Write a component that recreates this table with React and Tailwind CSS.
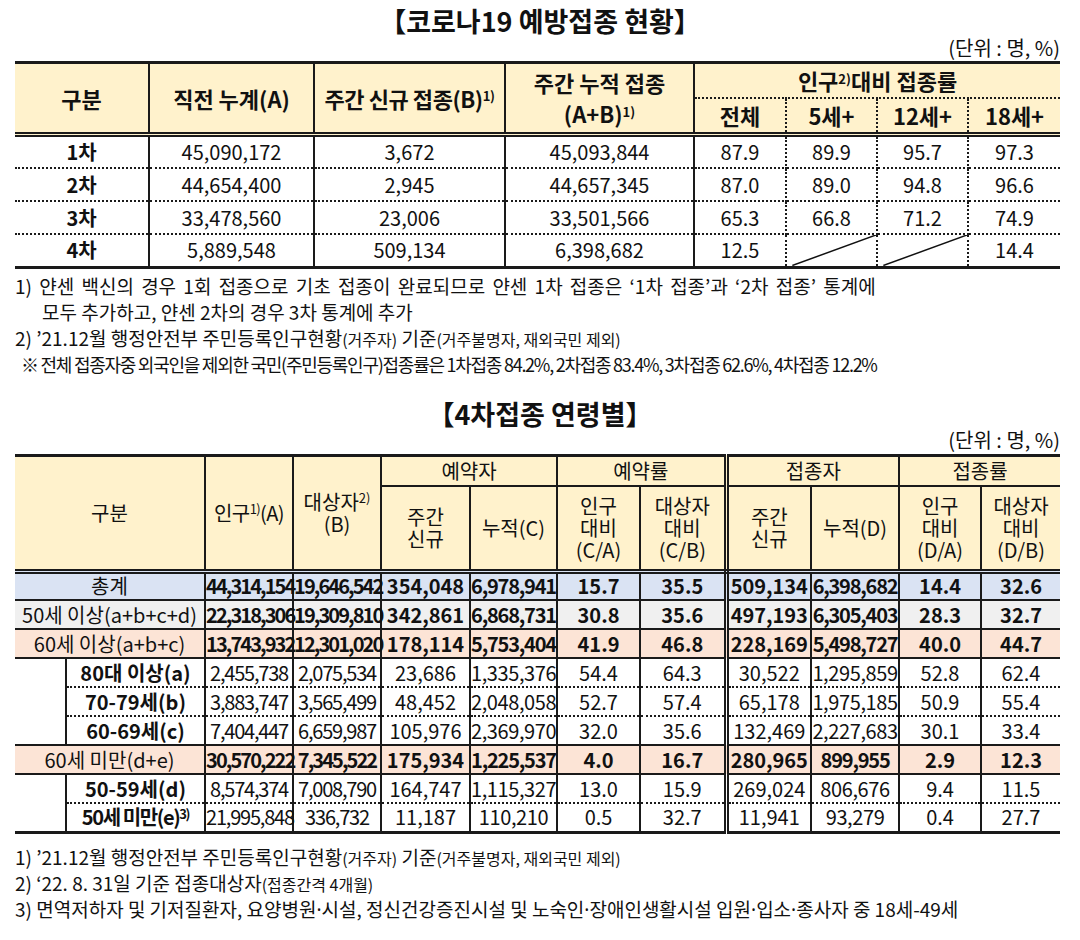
import React from "react";

const t1Rows = [
  ["1차", "45,090,172", "3,672", "45,093,844", "87.9", "89.9", "95.7", "97.3"],
  ["2차", "44,654,400", "2,945", "44,657,345", "87.0", "89.0", "94.8", "96.6"],
  ["3차", "33,478,560", "23,006", "33,501,566", "65.3", "66.8", "71.2", "74.9"],
  ["4차", "5,889,548", "509,134", "6,398,682", "12.5", null, null, "14.4"],
];

const t2Rows = [
  { label: "총계", bg: "bg-[#dae3f3]", bold: true, vals: ["44,314,154", "19,646,542", "354,048", "6,978,941", "15.7", "35.5", "509,134", "6,398,682", "14.4", "32.6"] },
  { label: "50세 이상(a+b+c+d)", bg: "bg-[#f0f0f0]", bold: true, vals: ["22,318,306", "19,309,810", "342,861", "6,868,731", "30.8", "35.6", "497,193", "6,305,403", "28.3", "32.7"] },
  { label: "60세 이상(a+b+c)", bg: "bg-[#fce4d6]", bold: true, vals: ["13,743,932", "12,301,020", "178,114", "5,753,404", "41.9", "46.8", "228,169", "5,498,727", "40.0", "44.7"] },
  { label: "80대 이상(a)", indent: 3, dotted: true, vals: ["2,455,738", "2,075,534", "23,686", "1,335,376", "54.4", "64.3", "30,522", "1,295,859", "52.8", "62.4"] },
  { label: "70-79세(b)", indent: 0, dotted: true, vals: ["3,883,747", "3,565,499", "48,452", "2,048,058", "52.7", "57.4", "65,178", "1,975,185", "50.9", "55.4"] },
  { label: "60-69세(c)", indent: 0, vals: ["7,404,447", "6,659,987", "105,976", "2,369,970", "32.0", "35.6", "132,469", "2,227,683", "30.1", "33.4"] },
  { label: "60세 미만(d+e)", bg: "bg-[#fce4d6]", bold: true, vals: ["30,570,222", "7,345,522", "175,934", "1,225,537", "4.0", "16.7", "280,965", "899,955", "2.9", "12.3"] },
  { label: "50-59세(d)", indent: 2, dotted: true, vals: ["8,574,374", "7,008,790", "164,747", "1,115,327", "13.0", "15.9", "269,024", "806,676", "9.4", "11.5"] },
  { label: "50세 미만(e)", sup: "3)", indent: 0, vals: ["21,995,848", "336,732", "11,187", "110,210", "0.5", "32.7", "11,941", "93,279", "0.4", "27.7"] },
];

function Sup({ children }) {
  return <sup className="text-[13px]">{children}</sup>;
}

// narrow middle dot (the CJK one is full width)
function Dot() {
  return <span className="font-['Noto_Sans',sans-serif]">·</span>;
}

function Slash() {
  return (
    <svg className="absolute inset-0 w-full h-full" viewBox="0 0 100 100" preserveAspectRatio="none">
      <line x1="6" y1="100" x2="100" y2="0" stroke="#111" strokeWidth="1.5" vectorEffect="non-scaling-stroke" />
    </svg>
  );
}

function VaccineTable() {
  const th = "p-0 bg-[#fff2cc] font-bold text-[22px] border-[#1a1a1a] text-center";
  return (
    <table className="mx-[15px] w-[1045px] table-fixed border-collapse border-t-[3px] border-b-[3px] border-[#1a1a1a] text-[20px]">
      <colgroup>
        <col className="w-[134px]" />
        <col className="w-[165px]" />
        <col className="w-[191px]" />
        <col className="w-[189px]" />
        <col className="w-[92px]" />
        <col className="w-[91px]" />
        <col className="w-[91px]" />
        <col className="w-[92px]" />
      </colgroup>
      <thead>
        <tr className="h-[35px]">
          <th rowSpan={2} className={`${th} border-r-2 border-b-[5px] [border-bottom-style:double]`}>구분</th>
          <th rowSpan={2} className={`${th} border-r-2 border-b-[5px] [border-bottom-style:double]`}>직전 누계(A)</th>
          <th rowSpan={2} className={`${th} border-r-2 border-b-[5px] [border-bottom-style:double] whitespace-nowrap tracking-[-0.02em]`}>
            주간 신규 접종(B)<Sup>1)</Sup>
          </th>
          <th rowSpan={2} className={`${th} border-r-2 border-b-[5px] [border-bottom-style:double] leading-[31px]`}>
            주간 누적 접종
            <br />
            (A+B)<Sup>1)</Sup>
          </th>
          <th colSpan={4} className={`${th} border-b-2 [border-bottom-style:dotted]`}>
            인구<Sup>2)</Sup>대비 접종률
          </th>
        </tr>
        <tr className="h-[35px]">
          {["전체", "5세+", "12세+", "18세+"].map((t, i) => (
            <th
              key={t}
              className={`${th} border-b-[5px] [border-bottom-style:double] ${i < 3 ? "border-r-2 [border-right-style:dotted]" : ""}`}
            >
              {t}
            </th>
          ))}
        </tr>
      </thead>
      <tbody>
        {t1Rows.map((row) => (
          <tr key={row[0]} className="h-[33px]">
            {row.map((v, i) => (
              <td
                key={i}
                className={`relative p-0 text-center border-[#1a1a1a] border-b-2 [border-bottom-style:dotted] ${
                  i === 0 ? "font-bold" : ""
                } ${i < 4 ? "border-r-2" : ""} ${i >= 4 && i < 7 ? "border-r-2 [border-right-style:dotted]" : ""}`}
              >
                {v === null ? <Slash /> : v}
              </td>
            ))}
          </tr>
        ))}
      </tbody>
    </table>
  );
}

function AgeTable() {
  const th = "p-0 bg-[#fff2cc] font-normal border-[#1a1a1a] text-center leading-[22px]";
  const sub = ["주간\n신규", "누적(C)", "인구\n대비\n(C/A)", "대상자\n대비\n(C/B)", "주간\n신규", "누적(D)", "인구\n대비\n(D/A)", "대상자\n대비\n(D/B)"];
  const squeeze = (i, bold) => {
    if (i === 0 || i === 1) return bold ? "tracking-[-0.095em]" : "tracking-[-0.06em]";
    if (i === 3 || i === 7) return bold ? "tracking-[-0.06em]" : "tracking-[-0.02em]";
    return "";
  };
  return (
    <table className="mx-[15px] w-[1045px] table-fixed border-collapse border-t-[3px] border-b-[3px] border-[#1a1a1a] text-[20px] leading-[24px]">
      <colgroup>
        <col className="w-[51px]" />
        <col className="w-[139px]" />
        <col className="w-[88px]" />
        <col className="w-[88px]" />
        <col className="w-[89px]" />
        <col className="w-[87px]" />
        <col className="w-[83px]" />
        <col className="w-[86px]" />
        <col className="w-[85px]" />
        <col className="w-[88px]" />
        <col className="w-[82px]" />
        <col className="w-[79px]" />
      </colgroup>
      <thead>
        <tr className="h-[31px]">
          <th colSpan={2} rowSpan={2} className={`${th} border-r-2 border-b-[5px] [border-bottom-style:double]`}>구분</th>
          <th rowSpan={2} className={`${th} border-r-2 border-b-[5px] [border-bottom-style:double] whitespace-nowrap tracking-[-0.03em]`}>
            인구<Sup>1)</Sup>(A)
          </th>
          <th rowSpan={2} className={`${th} border-r-2 border-b-[5px] [border-bottom-style:double] leading-[20px]`}>
            대상자<Sup>2)</Sup>
            <br />
            (B)
          </th>
          <th colSpan={2} className={`${th} border-r-2 border-b-2`}>예약자</th>
          <th colSpan={2} className={`${th} border-r-[5px] [border-right-style:double] border-b-2`}>예약률</th>
          <th colSpan={2} className={`${th} border-r-2 border-b-2`}>접종자</th>
          <th colSpan={2} className={`${th} border-b-2`}>접종률</th>
        </tr>
        <tr className="h-[85px]">
          {sub.map((t, i) => (
            <th
              key={i}
              className={`${th} whitespace-pre-line border-b-[5px] [border-bottom-style:double] ${
                i === 3 ? "border-r-[5px] [border-right-style:double]" : i < 7 ? "border-r-2" : ""
              }`}
            >
              {t}
            </th>
          ))}
        </tr>
      </thead>
      <tbody>
        {t2Rows.map((r) => {
          const rowLine = r.dotted ? "border-b-2 [border-bottom-style:dotted]" : "border-b-2";
          return (
            <tr key={r.label} className={`h-[29px] ${r.bg || ""}`}>
              {r.indent === undefined ? (
                <td colSpan={2} className={`p-0 text-center whitespace-nowrap border-[#1a1a1a] border-r-2 ${rowLine}`}>
                  {r.label}
                </td>
              ) : (
                <>
                  {r.indent > 0 && <td rowSpan={r.indent} className="p-0 border-[#1a1a1a] border-r-2 border-b-2" />}
                  <td
                    className={`p-0 text-center font-bold whitespace-nowrap border-[#1a1a1a] border-r-2 ${rowLine} ${
                      r.sup ? "tracking-[-0.07em]" : ""
                    }`}
                  >
                    {r.label}
                    {r.sup && <Sup>{r.sup}</Sup>}
                  </td>
                </>
              )}
              {r.vals.map((v, i) => (
                <td
                  key={i}
                  className={`p-0 text-center whitespace-nowrap border-[#1a1a1a] ${rowLine} ${r.bold ? "font-bold" : ""} ${squeeze(i, r.bold)} ${
                    i === 5 ? "border-r-[5px] [border-right-style:double]" : i < 9 ? "border-r-2" : ""
                  }`}
                >
                  {v}
                </td>
              ))}
            </tr>
          );
        })}
      </tbody>
    </table>
  );
}

export default function App() {
  return (
    <div className="w-[1080px] h-[940px] overflow-hidden bg-white text-[#111] font-['Noto_Sans_CJK_KR','Noto_Sans',sans-serif]">
      {/* 코로나19 예방접종 현황 */}
      <h1 className="pt-[5px] text-center text-[27px] leading-[32px] font-bold">【코로나19 예방접종 현황】</h1>
      <div className="pr-[20px] text-right text-[20px] leading-[22px]">(단위 : 명, %)</div>
      <div className="mt-[2px]">
        <VaccineTable />
      </div>

      <div className="mt-[4px] pl-[15px] text-[19px] leading-[26px] whitespace-nowrap">
        <div className="h-[26px] [word-spacing:3px]">1) 얀센 백신의 경우 1회 접종으로 기초 접종이 완료되므로 얀센 1차 접종은 ‘1차 접종’과 ‘2차 접종’ 통계에</div>
        <div className="h-[26px] pl-[27px]">모두 추가하고, 얀센 2차의 경우 3차 통계에 추가</div>
        <div className="h-[26px]">
          2) ’21.12월 행정안전부 주민등록인구현황<span className="text-[16px]">(거주자)</span> 기준
          <span className="text-[16px]">(거주불명자, 재외국민 제외)</span>
        </div>
        <div className="h-[26px] pl-[6px] text-[18px] tracking-[-0.07em]">
          ※ 전체 접종자중 외국인을 제외한 국민(주민등록인구)접종률은 1차접종 84.2%, 2차접종 83.4%, 3차접종 62.6%, 4차접종 12.2%
        </div>
      </div>

      {/* 4차접종 연령별 */}
      <h2 className="mt-[22px] text-center text-[27px] leading-[30px] font-bold">【4차접종 연령별】</h2>
      <div className="pr-[20px] text-right text-[20px] leading-[22px]">(단위 : 명, %)</div>
      <div className="mt-[3px]">
        <AgeTable />
      </div>

      <div className="mt-[10px] pl-[15px] text-[19px] leading-[26px] whitespace-nowrap">
        <div className="h-[26px]">
          1) ’21.12월 행정안전부 주민등록인구현황<span className="text-[16px]">(거주자)</span> 기준
          <span className="text-[16px]">(거주불명자, 재외국민 제외)</span>
        </div>
        <div className="h-[26px]">
          2) ‘22. 8. 31일 기준 접종대상자<span className="text-[16px]">(접종간격 4개월)</span>
        </div>
        <div className="h-[26px]">
          3) 면역저하자 및 기저질환자, 요양병원<Dot />시설, 정신건강증진시설 및 노숙인<Dot />장애인생활시설 입원<Dot />입소<Dot />종사자 중 18세-49세
        </div>
      </div>
    </div>
  );
}
